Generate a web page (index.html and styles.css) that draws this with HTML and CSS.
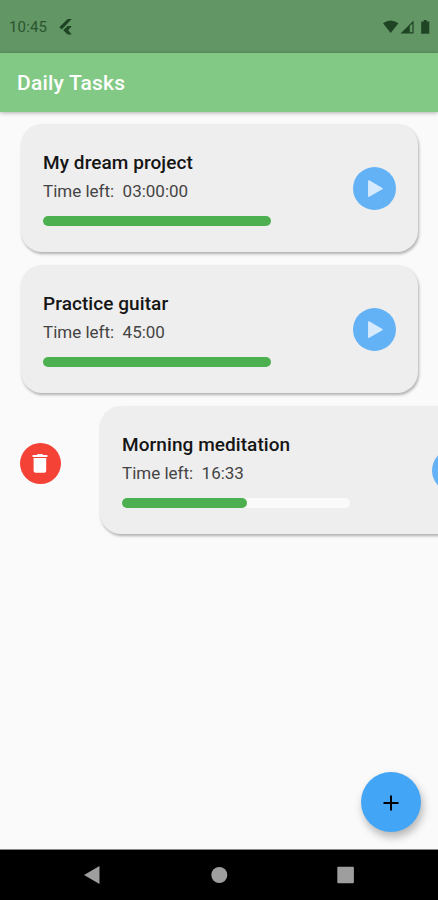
FILE: index.html
```html
<!DOCTYPE html>
<html lang="en">
<head>
<meta charset="utf-8">
<title>Daily Tasks</title>
<link rel="stylesheet" href="styles.css">
</head>
<body>
<div class="phone">
  <div class="status">
    <span class="clock">10:45</span>
    <svg class="flutter" width="14" height="18" viewBox="0 0 14 18"><path d="M0.3 9.2 8.6 1h4.2L2.8 11.4zM4.2 12.2 8.6 8h4.2L9.2 12.2l3.6 4.2H8.6z"/></svg>
    <svg class="signals" width="47" height="16" viewBox="0 0 47 16">
      <path d="M0 4.2Q7.7 -1.4 15.4 4.2L7.7 14z"/>
      <path d="M17.5 14.5 30.6 1.5v13zM29.4 4.4 26.8 7v6.3h2.6z" fill-rule="evenodd"/>
      <path d="M38.2 2.4h2.5V1h3v1.4h2.6v12.4h-8.1z"/>
    </svg>
  </div>
  <header class="bar"><h1>Daily Tasks</h1></header>
  <main class="tasks">
    <div class="row">
      <article class="card">
        <div class="info">
          <h2>My dream project</h2>
          <p>Time left:&nbsp; 03:00:00</p>
          <div class="track"><div class="fill"></div></div>
        </div>
        <button class="play" aria-label="Start"><svg width="43" height="43" viewBox="0 0 43 43"><path d="M15.8 14v15.2L29 21.6z"/></svg></button>
      </article>
    </div>
    <div class="row">
      <article class="card">
        <div class="info">
          <h2>Practice guitar</h2>
          <p>Time left:&nbsp; 45:00</p>
          <div class="track"><div class="fill"></div></div>
        </div>
        <button class="play" aria-label="Start"><svg width="43" height="43" viewBox="0 0 43 43"><path d="M15.8 14v15.2L29 21.6z"/></svg></button>
      </article>
    </div>
    <div class="row">
      <button class="delete" aria-label="Delete"><svg width="41" height="41" viewBox="0 0 41 41"><path d="M12.6 12h4.2l1.1-1h4.2l1.1 1h4.2v1.9H12.6zM13.6 15h12.6v12.8q0 2-2 2h-8.6q-2 0-2-2z"/></svg></button>
      <article class="card">
        <div class="info">
          <h2>Morning meditation</h2>
          <p>Time left:&nbsp; 16:33</p>
          <div class="track"><div class="fill" style="width:55%"></div></div>
        </div>
        <button class="play" aria-label="Start"><svg width="43" height="43" viewBox="0 0 43 43"><path d="M15.8 14v15.2L29 21.6z"/></svg></button>
      </article>
    </div>
  </main>
  <button class="fab" aria-label="Add task"><svg width="16" height="16" viewBox="0 0 16 16"><path d="M8 .5v15M.5 8h15"/></svg></button>
  <nav class="nav">
    <svg width="438" height="50" viewBox="0 0 438 50"><path d="M84 25 99.5 16v18z"/><circle cx="219.3" cy="25" r="8"/><rect x="337.3" y="16.8" width="16.6" height="16.4" rx="1"/></svg>
  </nav>
</div>
</body>
</html>
```

FILE: styles.css
```css
* { box-sizing: border-box; margin: 0; padding: 0; }
body { font-family: Roboto, sans-serif; background: #fafafa; }
button { border: 0; border-radius: 50%; flex: none; }
svg { display: block; }
.phone { position: relative; width: 438px; height: 900px; overflow: hidden; display: flex; flex-direction: column; }
.status { height: 53px; flex: none; background: #629665; display: flex; align-items: center; padding: 1px 8px 0 9px; fill: #1f4424; }
.clock { font-size: 15px; letter-spacing: .15px; color: #2a552e; }
.flutter { margin-left: 12px; }
.signals { margin-left: auto; }
.bar { height: 59px; flex: none; background: #82c985; display: flex; align-items: center; padding: 2px 17px 0; box-shadow: 0 1px 4px rgba(0,0,0,.3); }
.bar h1 { font-size: 21px; font-weight: 500; line-height: 29px; letter-spacing: .2px; color: #fff; }
.tasks { flex: 1; display: flex; flex-direction: column; gap: 12.8px; padding: 12px 20px 0 20px; }
.row { height: 128px; display: flex; align-items: center; }
.card { width: 396.5px; height: 128px; flex: none; margin-left: 1px; border-radius: 21px; background: #eee; box-shadow: 1px 2px 3px rgba(0,0,0,.3); display: flex; align-items: center; justify-content: space-between; padding: 0 21.5px 0 22px; }
.delete + .card { margin-left: 39px; }
.info { width: 228px; }
.info h2 { font-size: 19px; font-weight: 500; line-height: 26px; letter-spacing: .07px; color: #151515; white-space: nowrap; }
.info p { font-size: 17px; line-height: 24px; margin-top: 3px; color: #444; white-space: nowrap; }
.track { height: 10px; margin-top: 13px; border-radius: 5px; background: #fafafa; }
.fill { height: 10px; border-radius: 5px; background: #4caf50; }
.play { width: 43px; height: 43px; margin-top: 1px; background: #64b2f6; fill: #d5eafd; stroke: #d5eafd; stroke-width: 1.5; stroke-linejoin: round; }
.delete { width: 41px; height: 41px; margin-top: -12px; background: #f44336; fill: #fff; }
.fab { position: absolute; left: 361px; top: 772px; width: 60px; height: 60px; background: #42a5f5; display: flex; align-items: center; justify-content: center; box-shadow: 2px 5px 9px rgba(0,0,0,.28); stroke: #000; stroke-width: 2; padding-top: 1px; }
.nav { height: 51px; flex: none; background: #000; border-top: 1px solid #888; fill: #9e9e9e; }
```
